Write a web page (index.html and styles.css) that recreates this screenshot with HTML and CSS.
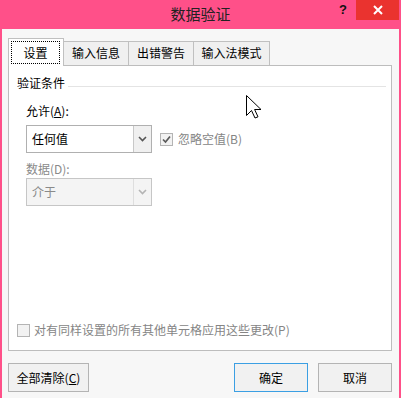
FILE: index.html
```html
<!DOCTYPE html>
<html lang="zh-CN">
<head>
    <meta charset="UTF-8">
    <title>数据验证</title>
    <link rel="stylesheet" href="styles.css">
</head>
<body>
    <div class="window">
        <div class="titlebar">
            <div class="spacer"></div>
            <div class="title">数据验证</div>
            <div class="controls">
                <span class="help">?</span>
                <span class="close">
                    <svg width="10" height="10" viewBox="0 0 10 10"><path d="M1 1 L9 9 M9 1 L1 9" stroke="#fff" stroke-width="2"/></svg>
                </span>
            </div>
        </div>
        <div class="client">
            <div class="tabs">
                <div class="tab active"><span class="focus">设置</span></div>
                <div class="tab t2">输入信息</div>
                <div class="tab t3">出错警告</div>
                <div class="tab t4">输入法模式</div>
            </div>
            <div class="panel">
                <div class="group-title"><span>验证条件</span><i class="rule"></i></div>
                <div class="field-label">允许(<u>A</u>):</div>
                <div class="row">
                    <div class="combo">
                        <span class="combo-text">任何值</span>
                        <span class="combo-btn">
                            <svg width="9" height="6" viewBox="0 0 9 6"><path d="M1 1 L4.5 4.5 L8 1" fill="none" stroke="#555" stroke-width="1.6"/></svg>
                        </span>
                    </div>
                    <div class="check">
                        <span class="box">
                            <svg width="11" height="11" viewBox="0 0 11 11"><path d="M2 5.5 L4.5 8 L9 2.5" fill="none" stroke="#5a5a5a" stroke-width="1.7"/></svg>
                        </span>
                        <span class="check-text">忽略空值(B)</span>
                    </div>
                </div>
                <div class="field-label disabled second">数据(D):</div>
                <div class="combo disabled">
                    <span class="combo-text">介于</span>
                    <span class="combo-btn">
                        <svg width="9" height="6" viewBox="0 0 9 6"><path d="M1 1 L4.5 4.5 L8 1" fill="none" stroke="#b4b4b4" stroke-width="1.6"/></svg>
                    </span>
                </div>
                <div class="check bottom">
                    <span class="box"></span>
                    <span class="check-text">对有同样设置的所有其他单元格应用这些更改(P)</span>
                </div>
            </div>
            <div class="buttons">
                <button class="btn clear">全部清除(<u>C</u>)</button>
                <span class="grow"></span>
                <button class="btn ok">确定</button>
                <button class="btn cancel">取消</button>
            </div>
        </div>
    </div>
    <svg class="cursor" width="16" height="24" viewBox="0 0 16 24">
        <path d="M0.5 0.5 L0.5 20.5 L5.5 15.5 L9 23 L12 21.8 L8.6 14.5 L15 14.5 Z" fill="#fff" stroke="#000" stroke-width="1"/>
    </svg>
</body>
</html>
```
FILE: styles.css
```css
body {
    margin: 0;
    width: 401px;
    height: 398px;
    overflow: hidden;
    font-family: "Noto Sans CJK SC", "Noto Sans", sans-serif;
    font-size: 12px;
    color: #000;
    background-color: #ff5089;
    position: relative;
}
.window {
    height: 398px;
    display: flex;
    flex-direction: column;
}
.titlebar {
    height: 29px;
    display: flex;
}
.spacer {
    width: 71px;
}
.title {
    flex: 1;
    text-align: center;
    font-size: 15px;
    line-height: 28px;
    color: #222;
}
.controls {
    width: 71px;
    display: flex;
    align-items: flex-start;
}
.help {
    width: 26px;
    text-align: center;
    font-family: "Liberation Sans", sans-serif;
    font-weight: bold;
    font-size: 13px;
    line-height: 20px;
    color: #111;
}
.close {
    width: 43px;
    height: 20px;
    background-color: #ea332f;
    display: flex;
    align-items: center;
    justify-content: center;
}
.client {
    flex: 1;
    margin: 0 2px;
    background-color: #f7f7f7;
    padding: 9px 7px 0 6px;
}
.tabs {
    display: flex;
    align-items: flex-end;
    height: 27px;
}
.tab {
    box-sizing: border-box;
    height: 24px;
    border: 1px solid #c0c0c0;
    border-bottom: none;
    background-color: #f0f0f0;
    margin-left: -1px;
    text-align: center;
    line-height: 22px;
}
.tab.active {
    position: relative;
    z-index: 1;
    width: 56px;
    height: 28px;
    margin-left: 0;
    margin-bottom: -1px;
    padding: 2px 3px 2px 2px;
    background-color: #fff;
}
.focus {
    display: block;
    height: 23px;
    box-sizing: border-box;
    border: 1px dotted #000;
    line-height: 21px;
}
.t2 { width: 66px; }
.t3 { width: 66px; }
.t4 { width: 77px; }
.panel {
    height: 286px;
    box-sizing: border-box;
    border: 1px solid #bdbdbd;
    background-color: #fff;
    display: flex;
    flex-direction: column;
    padding: 0 5px 0 8px;
}
.group-title {
    display: flex;
    height: 16px;
    line-height: 16px;
    margin-top: 9px;
}
.rule {
    flex: 1;
    height: 1px;
    margin: 11px 0 0 3px;
    background-color: #e4e4e4;
}
.field-label {
    margin: 12px 0 0 9px;
    line-height: 16px;
}
.field-label.second {
    margin-top: 8px;
}
.disabled {
    color: #8a8a8a;
}
.row {
    display: flex;
    align-items: center;
    margin-top: 6px;
}
.combo {
    box-sizing: border-box;
    width: 126px;
    height: 28px;
    margin-left: 9px;
    border: 1px solid #b0b0b0;
    background-color: #fff;
    display: flex;
}
.combo.disabled {
    margin-top: 1px;
    border-color: #c6c6c6;
    background-color: #f4f4f4;
}
.combo-text {
    flex: 1;
    padding-left: 5px;
    line-height: 26px;
}
.combo-btn {
    width: 17px;
    border-left: 1px solid #c8c8c8;
    background-color: #f0f0f0;
    display: flex;
    align-items: center;
    justify-content: center;
}
.combo.disabled .combo-btn {
    border-left-color: #dedede;
    background-color: #f4f4f4;
}
.check {
    display: flex;
    align-items: center;
    margin-left: 8px;
    line-height: 16px;
}
.box {
    box-sizing: border-box;
    width: 13px;
    height: 13px;
    border: 1px solid #b4b4b4;
    background-color: #f2f2f2;
    display: flex;
    align-items: center;
    justify-content: center;
}
.check-text {
    margin-left: 5px;
    color: #858585;
}
.check.bottom {
    margin: auto 0 12px 0;
}
.check.bottom .check-text {
    margin-left: 4px;
}
.buttons {
    display: flex;
    margin-top: 12px;
    gap: 10px;
}
.grow {
    flex: 1;
}
.btn {
    box-sizing: border-box;
    height: 29px;
    width: 74px;
    border: 1px solid #b4b4b4;
    background-color: #f1f1f1;
    font-family: inherit;
    font-size: 12px;
    color: #000;
    padding: 0;
}
.btn.clear {
    width: 81px;
}
.btn.ok {
    border-color: #3b9fe3;
}
.cursor {
    position: absolute;
    left: 246px;
    top: 95px;
}
```
